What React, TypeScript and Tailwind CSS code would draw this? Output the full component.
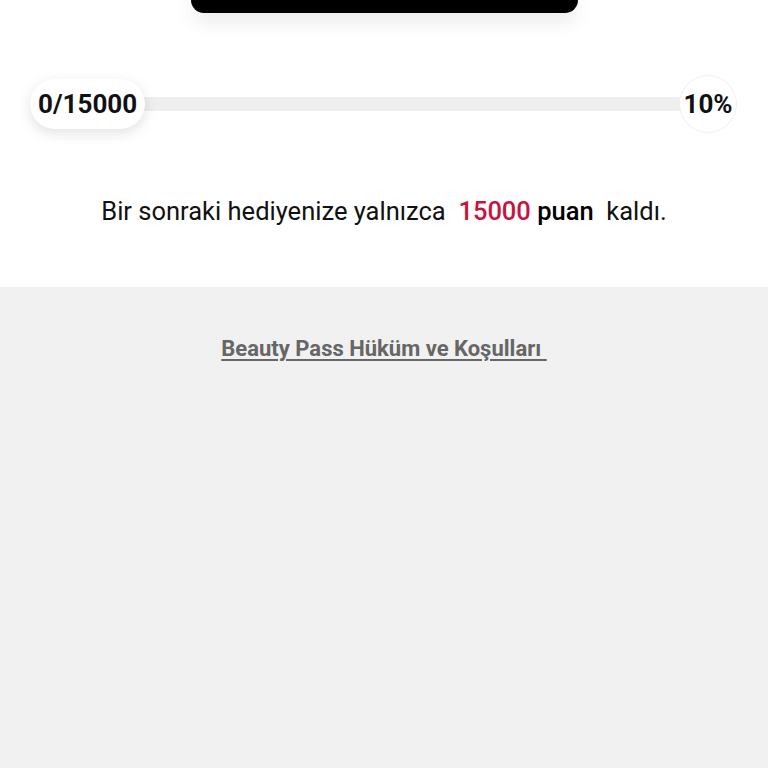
export default function App() {
  return (
    <div className="w-[768px] h-[768px] overflow-hidden bg-[#f1f1f1]" style={{ fontFamily: "Roboto, 'Liberation Sans', sans-serif" }}>
      <div className="bg-white h-[287px] flex flex-col">
        <div className="flex justify-center">
          <div className="w-[387px] h-[13px] bg-black rounded-b-[16px] shadow-[0_6px_20px_rgba(0,0,0,0.12)]" />
        </div>
        <div className="relative mt-[62px] h-[58px] ml-[30px] mr-[31px] flex items-center">
          <div className="absolute left-[100px] right-[30px] top-[22px] h-[14px] bg-[#efefef]" />
          <div className="relative z-10 h-[50px] px-[8px] rounded-full bg-white flex items-center shadow-[0_4px_14px_rgba(0,0,0,0.12)]">
            <span className="text-[26px] font-bold text-[#111] leading-none">0/15000</span>
          </div>
          <div className="flex-1" />
          <div className="relative z-10 w-[58px] h-[58px] rounded-full bg-white border border-[#f0f0f0] flex items-center justify-center">
            <span className="text-[26px] font-bold text-[#111] leading-none">10%</span>
          </div>
        </div>
        <p className="mt-[66px] text-center text-[25.5px] text-[#111] leading-none whitespace-pre">
          {"Bir sonraki hediyenize yalnızca  "}
          <span className="text-[#c8133f] font-medium">15000</span>
          {" "}
          <span className="font-medium text-black">puan</span>
          {"  kaldı."}
        </p>
      </div>
      <div className="flex justify-center pt-[51px]">
        <a className="text-[22px] font-bold text-[#666] underline underline-offset-[3px] whitespace-pre leading-none">{"Beauty Pass Hüküm ve Koşulları "}</a>
      </div>
    </div>
  );
}
